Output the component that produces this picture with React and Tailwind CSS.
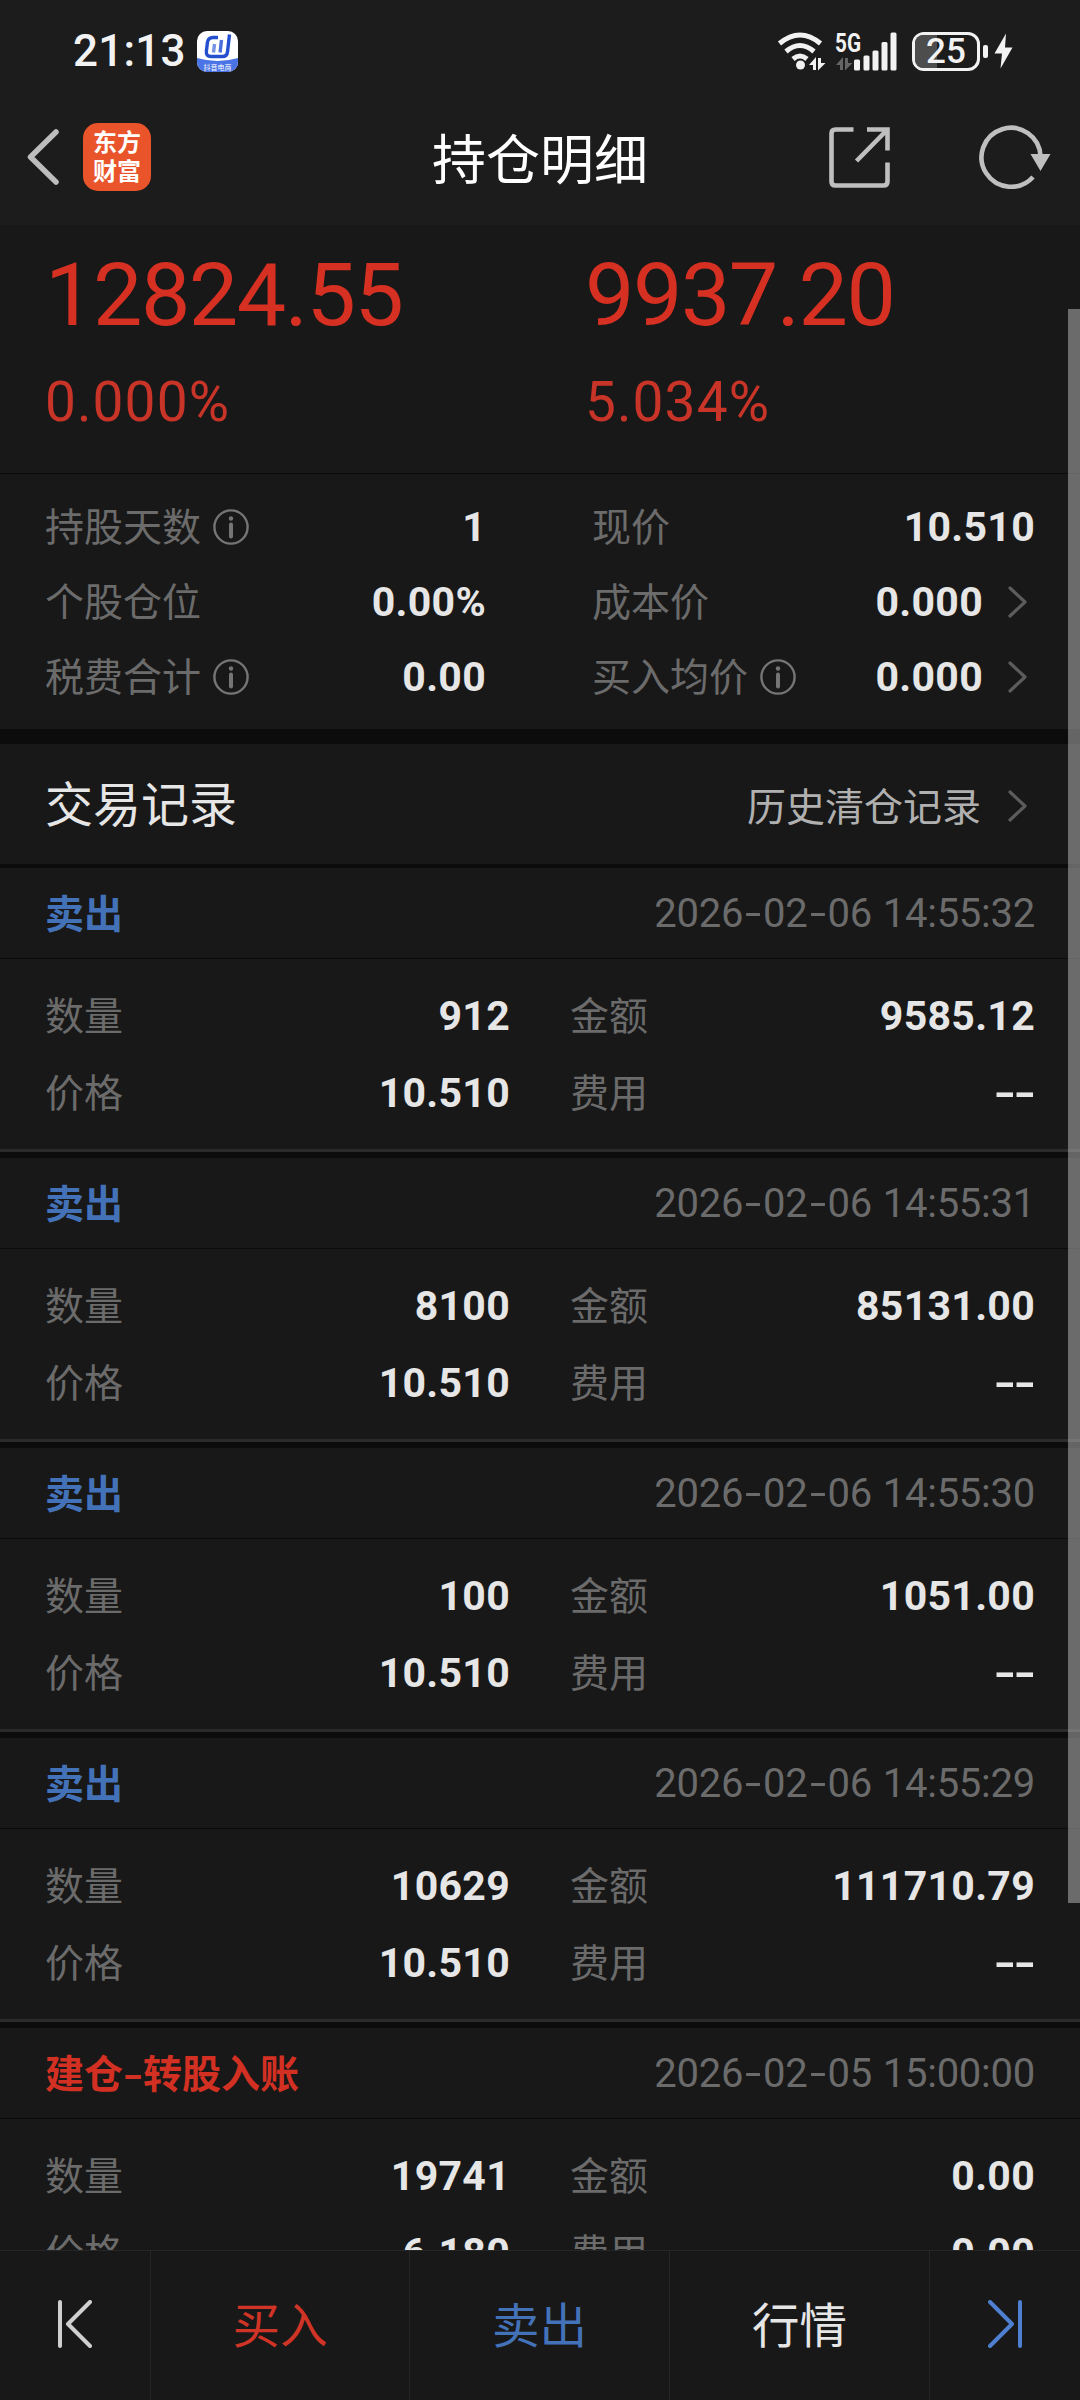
import React from 'react';

const summary = [
  { value: '12824.55', percent: '0.000%' },
  { value: '9937.20', percent: '5.034%' },
];

const stats = [
  [
    { label: '持股天数', info: true, value: '1' },
    { label: '个股仓位', value: '0.00%' },
    { label: '税费合计', info: true, value: '0.00' },
  ],
  [
    { label: '现价', value: '10.510' },
    { label: '成本价', value: '0.000', link: true },
    { label: '买入均价', info: true, value: '0.000', link: true },
  ],
];

const records = [
  { type: 'sell', title: '卖出', time: '2026-02-06 14:55:32', count: '912', amount: '9585.12', price: '10.510', fee: '--' },
  { type: 'sell', title: '卖出', time: '2026-02-06 14:55:31', count: '8100', amount: '85131.00', price: '10.510', fee: '--' },
  { type: 'sell', title: '卖出', time: '2026-02-06 14:55:30', count: '100', amount: '1051.00', price: '10.510', fee: '--' },
  { type: 'sell', title: '卖出', time: '2026-02-06 14:55:29', count: '10629', amount: '111710.79', price: '10.510', fee: '--' },
  { type: 'buy', title: '建仓-转股入账', time: '2026-02-05 15:00:00', count: '19741', amount: '0.00', price: '6.180', fee: '0.00' },
];

// Hyphens are drawn as wide as a digit
function Dashed({ text }) {
  return text.split('').map((char, index) =>
    char === '-' ? (
      <span key={index} className="inline-block w-5 scale-x-[1.45] text-center tracking-normal">-</span>
    ) : (
      char
    )
  );
}

function Value({ children }) {
  return (
    <span className="mt-[2px] font-[Roboto] text-[41px] leading-none font-bold tracking-[0.3px] whitespace-nowrap text-[#e6e6e6]">
      <Dashed text={children} />
    </span>
  );
}

function Label({ children }) {
  return <span className="-mt-1 text-[39px] leading-none text-[#6b6b6b]">{children}</span>;
}

function InfoIcon() {
  return (
    <svg className="ml-3 h-9 w-9" viewBox="0 0 36 36" fill="none">
      <circle cx="18" cy="18" r="16.6" stroke="#757575" strokeWidth="2.4" />
      <circle cx="18" cy="9.5" r="2.2" fill="#757575" />
      <path d="M18 15.5v12" stroke="#757575" strokeWidth="4" strokeLinecap="round" />
    </svg>
  );
}

function ChevronIcon() {
  return (
    <svg className="h-8 w-[19px]" viewBox="0 0 19 32" fill="none">
      <path d="M2 2l15 14L2 30" stroke="#5c5c5c" strokeWidth="3.2" strokeLinecap="round" strokeLinejoin="round" />
    </svg>
  );
}

function StatusBar() {
  return (
    <div className="flex h-[102px] items-center pl-[73px]">
      <span className="w-[124px] font-[Roboto] text-[44px] leading-none font-medium tracking-[0.2px] text-[#f2f2f2]">21:13</span>
      <div className="relative h-[41px] w-[41px] overflow-hidden rounded-[10px] bg-white">
        <svg className="absolute inset-0" width="41" height="41" viewBox="0 0 41 41" fill="none">
          <path d="M0 27q20.500 6 41 0v14H0z" fill="#4a74e6" />
          <path d="M21 6.500h-5q-5 0-5.600 5l-1 8.500q-.6 5.500 4.600 5.500h11.500q4.500 0 5-4.500L32.500 3.500" stroke="#2450d0" strokeWidth="3.400" />
          <path d="M17.500 13l-1 8.500" stroke="#7592e4" strokeWidth="3.400" />
          <path d="M24.500 9l-1.400 12.500" stroke="#4a6fdb" strokeWidth="3.400" />
        </svg>
        <span className="absolute inset-x-0 bottom-[1px] text-center text-[7px] leading-[8px] text-white">抖音电商</span>
      </div>
      <div className="ml-[538px] flex items-center">
        <svg width="121" height="40" viewBox="0 0 121 40" fill="none">
          {/* wifi */}
          <g stroke="#f2f2f2" strokeWidth="5">
            <path d="M3.500 12.500q20.500-17 41 0" />
            <path d="M10 20.500q14-12 28 0" />
            <path d="M17 28q7-6 14 0" />
          </g>
          <circle cx="24.500" cy="34" r="4.500" fill="#f2f2f2" />
          <path d="M33 34l7-8v13h-3v-5zM49.500 32l-7.500 7.500V27h3v5z" fill="#f2f2f2" />
          {/* mobile data */}
          <path d="M60 34l7-8v13h-3v-5zM76.500 32l-7.500 7.500V27h3v5z" fill="#646464" />
          <g fill="#f2f2f2">
            <rect x="78" y="28.500" width="6" height="11" rx="1.500" />
            <rect x="87.500" y="24.500" width="6" height="15" rx="1.500" />
            <rect x="96.500" y="19.500" width="6" height="20" rx="1.500" />
            <rect x="105.500" y="11" width="6" height="28.500" rx="1.500" />
            <rect x="114.500" y="1.500" width="6" height="38" rx="1.500" />
          </g>
          <text x="59" y="20.500" fill="#f2f2f2" fontFamily="Roboto" fontSize="26" fontWeight="700" textLength="26" lengthAdjust="spacingAndGlyphs">5G</text>
        </svg>
        <div className="ml-[15px] flex h-[39px] w-[68px] items-center rounded-[12px] border-[3.5px] border-[#f2f2f2]">
          <div className="flex h-full w-full items-center justify-center rounded-[8px] bg-linear-to-r from-[#4d4d4d] from-35% to-transparent to-35%">
            <span className="font-[Roboto] text-[35px] leading-none font-medium text-[#f2f2f2]">25</span>
          </div>
        </div>
        <span className="ml-[3px] h-[13px] w-[5px] rounded-[2px] bg-[#f2f2f2]" />
        <svg className="ml-[6px]" width="19" height="36" viewBox="0 0 19 36">
          <path d="M12 0.500L0.500 20.500H8L6.500 35.500L18.500 14.500H11z" fill="#f2f2f2" />
        </svg>
      </div>
    </div>
  );
}

function NavBar() {
  return (
    <div className="flex h-[123px] items-center pb-[13px] pl-[27px]">
      <svg width="33" height="56" viewBox="0 0 33 56" fill="none">
        <path d="M29 3L3.500 28L29 53" stroke="#bdbdbd" strokeWidth="5.500" strokeLinecap="round" strokeLinejoin="round" />
      </svg>
      <div className="ml-[23px] flex h-[68px] w-[68px] flex-col items-center justify-center rounded-[15px] bg-[#e9542a] pb-1 text-[24px] leading-[29px] font-bold text-white">
        <span>东方</span>
        <span>财富</span>
      </div>
      <h1 className="ml-[281px] w-[216px] text-[54px] leading-none whitespace-nowrap text-white">持仓明细</h1>
      <svg className="ml-[181px]" width="61" height="61" viewBox="0 0 61 61" fill="none" stroke="#bfbfbf" strokeWidth="4.600">
        <path d="M24.500 2.500H6.500q-4 0-4 4v48q0 4 4 4h48q4 0 4-4V35.500" />
        <path d="M38 2.500h20.500v21M58 3L27.500 34" />
      </svg>
      <svg className="ml-[89px]" width="72" height="64" viewBox="0 0 72 64" fill="none">
        <path d="M61.500 31A29.500 29.500 0 1 0 54 52" stroke="#bfbfbf" strokeWidth="4.600" />
        <path d="M51.500 29h20L61.500 46z" fill="#bfbfbf" />
      </svg>
    </div>
  );
}

function Stat({ label, info, value, link }) {
  return (
    <div className="flex h-[75px] items-center">
      <Label>{label}</Label>
      {info && <InfoIcon />}
      <div className="flex flex-1 items-center justify-end">
        <Value>{value}</Value>
        {link && (
          <span className="ml-[25px] pr-2">
            <ChevronIcon />
          </span>
        )}
      </div>
    </div>
  );
}

function Field({ label, value }) {
  return (
    <div className="flex h-[77px] items-center justify-between">
      <Label>{label}</Label>
      <Value>{value}</Value>
    </div>
  );
}

function Record({ record }) {
  return (
    <div className="h-[290px] shrink-0 border-b-[6px] border-[#0c0c0c]">
      <div className="h-[284px] border-b-[3px] border-[#2b2b2b]">
        <div className="flex h-[91px] items-center justify-between border-b border-[#0c0c0c] pr-[45px] pl-[45px]">
          <span className={`-mt-1 text-[39px] leading-none font-bold ${record.type === 'sell' ? 'text-[#4472b8]' : 'text-[#d23022]'}`}>
            <Dashed text={record.title} />
          </span>
          <span className="mt-[2px] font-[Roboto] text-[40px] leading-none font-normal tracking-[-0.25px] [word-spacing:1px] whitespace-nowrap text-[#6b6b6b]">
            <Dashed text={record.time} />
          </span>
        </div>
        <div className="grid grid-cols-[465px_465px] gap-x-[60px] pt-[18px] pl-[45px]">
          <Field label="数量" value={record.count} />
          <Field label="金额" value={record.amount} />
          <Field label="价格" value={record.price} />
          <Field label="费用" value={record.fee} />
        </div>
      </div>
    </div>
  );
}

function BottomBar() {
  return (
    <div className="grid h-[150px] shrink-0 grid-cols-[151px_259px_260px_260px_150px] divide-x divide-[#262626] border-t border-[#262626] bg-[#181818] text-[47.5px] leading-none">
      <div className="flex items-center justify-center pb-[4px]">
        <svg width="34" height="48" viewBox="0 0 34 48" fill="none" stroke="#cfcfcf" strokeWidth="4" strokeLinecap="round" strokeLinejoin="round">
          <path d="M2 2v44M32 2L10 24l22 22" />
        </svg>
      </div>
      <div className="flex items-center justify-center pb-[5px] text-[#d03426]">买入</div>
      <div className="flex items-center justify-center pb-[5px] text-[#4472b8]">卖出</div>
      <div className="flex items-center justify-center pb-[5px] text-[#e6e6e6]">行情</div>
      <div className="flex items-center justify-center pb-[4px]">
        <svg width="34" height="48" viewBox="0 0 34 48" fill="none" stroke="#4f7fd0" strokeWidth="4" strokeLinecap="round" strokeLinejoin="round">
          <path d="M32 2v44M2 2l22 22L2 46" />
        </svg>
      </div>
    </div>
  );
}

function App() {
  return (
    <div className="relative flex h-[2400px] w-[1080px] flex-col overflow-hidden bg-[#181818] font-['Noto_Sans_CJK_SC',sans-serif]">
      <header className="h-[225px] shrink-0 bg-[#1c1c1c]">
        <StatusBar />
        <NavBar />
      </header>

      <main className="flex min-h-0 flex-1 flex-col overflow-hidden">
        <section className="grid h-[249px] shrink-0 grid-cols-2 border-b border-[#0c0c0c] pt-[25px] font-[Roboto] text-[#d63023]">
          {summary.map((item) => (
            <div key={item.value} className="pl-[45px]">
              <div className="text-[88px] leading-[90px] tracking-[-1.5px]">{item.value}</div>
              <div className="mt-[32px] text-[55px] leading-[60px] tracking-[1.1px] text-[#c93428]">{item.percent}</div>
            </div>
          ))}
        </section>

        <section className="grid h-[270px] shrink-0 grid-cols-[441px_443px] gap-x-[106px] border-b-[15px] border-[#0c0c0c] pt-[15px] pl-[45px]">
          {stats.map((column, index) => (
            <div key={index}>
              {column.map((item) => (
                <Stat key={item.label} {...item} />
              ))}
            </div>
          ))}
        </section>

        <section className="flex h-[124px] shrink-0 items-center border-b-4 border-[#0c0c0c] pr-[53px] pl-[45px]">
          <h2 className="-mt-[7px] flex-1 text-[48px] leading-none text-[#e6e6e6]">交易记录</h2>
          <span className="text-[39px] leading-none text-[#b0b0b0]">历史清仓记录</span>
          <span className="mt-1 ml-[27px]">
            <ChevronIcon />
          </span>
        </section>

        {records.map((record) => (
          <Record key={record.time} record={record} />
        ))}
      </main>

      <BottomBar />

      {/* scrollbar thumb */}
      <div className="absolute top-[309px] right-0 h-[1594px] w-3 bg-[#bebebe]/50" />
    </div>
  );
}

export default App;
